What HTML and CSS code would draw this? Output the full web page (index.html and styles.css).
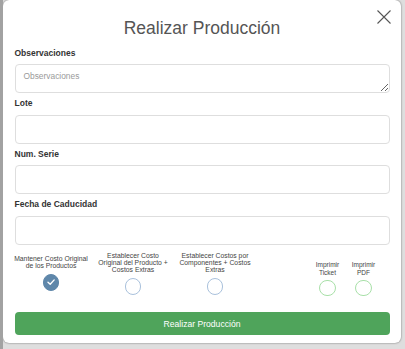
FILE: index.html
```html
<!DOCTYPE html>
<html lang="es">
<head>
  <meta charset="UTF-8">
  <title>Realizar Producción</title>
  <meta name="viewport" content="width=device-width, initial-scale=1.0">
  <link rel="stylesheet" href="styles.css">
</head>
<body>

  <!-- Modal Producción -->
  <div class="modal">
    <button class="modal-close" aria-label="Cerrar">
      <svg width="14" height="14" viewBox="0 0 14 14">
        <path d="M0.5 0.5 L13.5 13.5 M13.5 0.5 L0.5 13.5" stroke="#555" stroke-width="1.1" fill="none"/>
      </svg>
    </button>

    <h2 class="modal-title">Realizar Producción</h2>

    <div class="field">
      <label>Observaciones</label>
      <textarea class="form-control" placeholder="Observaciones"></textarea>
    </div>
    <div class="field">
      <label>Lote</label>
      <input class="form-control" type="text">
    </div>
    <div class="field">
      <label>Num. Serie</label>
      <input class="form-control" type="text">
    </div>
    <div class="field">
      <label>Fecha de Caducidad</label>
      <input class="form-control" type="text">
    </div>

    <!-- Opciones de costo / impresion -->
    <div class="options">
      <div class="option option-first">
        <span class="option-text">Mantener Costo Original<br>de los Productos</span>
        <span class="check checked">
          <svg width="10" height="10" viewBox="0 0 10 10">
            <path d="M2 5.2 L4.2 7.3 L8.2 2.9" stroke="#fff" stroke-width="1.4" fill="none" stroke-linecap="round" stroke-linejoin="round"/>
          </svg>
        </span>
      </div>
      <div class="option">
        <span class="option-text">Establecer Costo<br>Original del Producto +<br>Costos Extras</span>
        <span class="check"></span>
      </div>
      <div class="option">
        <span class="option-text">Establecer Costos por<br>Componentes + Costos<br>Extras</span>
        <span class="check"></span>
      </div>

      <div class="print-group">
        <div class="option print">
          <span class="option-text">Imprimir<br>Ticket</span>
          <span class="check check-green"></span>
        </div>
        <div class="option print">
          <span class="option-text">Imprimir<br>PDF</span>
          <span class="check check-green"></span>
        </div>
      </div>
    </div>

    <button class="btn-submit">Realizar Producción</button>
  </div>

</body>
</html>
```

FILE: styles.css
```css
/* Grundlayout */
body {
  margin: 0;
  padding: 0;
  background: #dedede;
  border-left: 3px solid #a2a2a2;
  font-family: "Liberation Sans", Arial, sans-serif;
  overflow: hidden;
  height: 349px;
  box-sizing: border-box;
}

/* Modal */
.modal {
  position: relative;
  width: 398px;
  box-sizing: border-box;
  padding: 0 11.5px 8.5px;
  background: #fff;
  border-radius: 6px;
  box-shadow: 0 0 2px rgba(0,0,0,0.55);
}
.modal-close {
  position: absolute;
  top: 9.5px; right: 10px;
  width: 14px; height: 14px;
  padding: 0;
  border: none;
  background: none;
  cursor: pointer;
}
.modal-close svg {
  display: block;
}
.modal-title {
  margin: 0;
  padding-top: 16.5px;
  text-align: center;
  font-size: 17.5px;
  line-height: 22px;
  font-weight: normal;
  color: #555;
}

/* Formularfelder */
.field {
  margin-top: 5.1px;
}
.field:first-of-type {
  margin-top: 9.2px;
}
.field label {
  display: block;
  font-size: 8.5px;
  line-height: 11px;
  font-weight: bold;
  color: #333;
  margin-bottom: 5.4px;
}
.form-control {
  display: block;
  width: 100%;
  height: 29px;
  box-sizing: border-box;
  padding: 0 8px;
  border: 1px solid #dedede;
  border-radius: 4px;
  font-family: inherit;
  font-size: 8.4px;
  color: #333;
  background: #fff;
}
textarea.form-control {
  padding-top: 6px;
  resize: vertical;
}
.form-control::placeholder {
  color: #9a9a9a;
}

/* Optionen */
.options {
  display: flex;
  align-items: flex-start;
  gap: 9px;
  margin-top: 7px;
}
.option {
  width: 73px;
  display: flex;
  flex-direction: column;
  align-items: center;
  gap: 5px;
}
.option-first {
  margin-top: 3.3px;
}
.option-text {
  font-size: 6.8px;
  line-height: 7.2px;
  color: #444;
  text-align: center;
  white-space: nowrap;
}
.check {
  width: 16.5px;
  height: 16.5px;
  box-sizing: border-box;
  border-radius: 50%;
  border: 1px solid #a9c1dc;
  background: #fff;
  display: flex;
  align-items: center;
  justify-content: center;
}
.check.checked {
  background: #5f87aa;
  border-color: #5f87aa;
}
.check-green {
  border-color: #a8e0a8;
}

.print-group {
  display: flex;
  gap: 6px;
  margin-left: auto;
  margin-right: 11px;
  margin-top: 9px;
}
.option.print {
  width: 30px;
  gap: 2.5px;
}
.option.print .option-text {
  font-size: 6.5px;
  line-height: 8.3px;
}

/* Button */
.btn-submit {
  display: block;
  width: 100%;
  height: 22.5px;
  margin-top: 16.3px;
  border: none;
  border-radius: 4px;
  background: #4fa45b;
  color: #fff;
  font-family: inherit;
  font-size: 8.6px;
  cursor: pointer;
}
```
